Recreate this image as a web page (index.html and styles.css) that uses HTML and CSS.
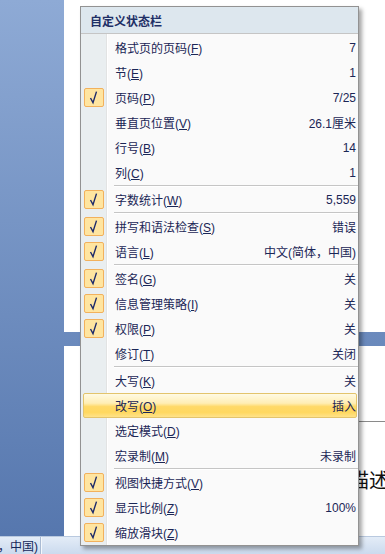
FILE: index.html
```html
<!DOCTYPE html>
<html lang="zh-CN">
<head>
  <meta charset="utf-8">
  <title>自定义状态栏</title>
  <link rel="stylesheet" href="styles.css">
</head>
<body>
<div class="window">
  <div class="workspace">
    <div class="page page-first"></div>
    <div class="page page-second">
      <div class="table-line"></div>
      <div class="doc-text">描述</div>
    </div>
  </div>
  <div class="statusbar">
    <span class="status-cell">，中国)</span>
  </div>
</div>

<div class="menu">
  <header class="menu-title">自定义状态栏</header>
  <div class="menu-body">
    <div class="item"><span class="icon"></span><span class="label">格式页的页码(<u>F</u>)</span><span class="value">7</span></div>
    <div class="item"><span class="icon"></span><span class="label">节(<u>E</u>)</span><span class="value">1</span></div>
    <div class="item"><span class="icon"><span class="check"><svg viewBox="0 0 18 17" width="18" height="17"><polyline points="5.5,9 8,13.6 11.5,2.6" fill="none" stroke="#1d2a6a" stroke-width="1.4"/></svg></span></span><span class="label">页码(<u>P</u>)</span><span class="value">7/25</span></div>
    <div class="item"><span class="icon"></span><span class="label">垂直页位置(<u>V</u>)</span><span class="value">26.1厘米</span></div>
    <div class="item"><span class="icon"></span><span class="label">行号(<u>B</u>)</span><span class="value">14</span></div>
    <div class="item"><span class="icon"></span><span class="label">列(<u>C</u>)</span><span class="value">1</span></div>
    <div class="sep"></div>
    <div class="item"><span class="icon"><span class="check"><svg viewBox="0 0 18 17" width="18" height="17"><polyline points="5.5,9 8,13.6 11.5,2.6" fill="none" stroke="#1d2a6a" stroke-width="1.4"/></svg></span></span><span class="label">字数统计(<u>W</u>)</span><span class="value">5,559</span></div>
    <div class="sep"></div>
    <div class="item"><span class="icon"><span class="check"><svg viewBox="0 0 18 17" width="18" height="17"><polyline points="5.5,9 8,13.6 11.5,2.6" fill="none" stroke="#1d2a6a" stroke-width="1.4"/></svg></span></span><span class="label">拼写和语法检查(<u>S</u>)</span><span class="value">错误</span></div>
    <div class="item"><span class="icon"><span class="check"><svg viewBox="0 0 18 17" width="18" height="17"><polyline points="5.5,9 8,13.6 11.5,2.6" fill="none" stroke="#1d2a6a" stroke-width="1.4"/></svg></span></span><span class="label">语言(<u>L</u>)</span><span class="value">中文(简体，中国)</span></div>
    <div class="sep"></div>
    <div class="item"><span class="icon"><span class="check"><svg viewBox="0 0 18 17" width="18" height="17"><polyline points="5.5,9 8,13.6 11.5,2.6" fill="none" stroke="#1d2a6a" stroke-width="1.4"/></svg></span></span><span class="label">签名(<u>G</u>)</span><span class="value">关</span></div>
    <div class="item"><span class="icon"><span class="check"><svg viewBox="0 0 18 17" width="18" height="17"><polyline points="5.5,9 8,13.6 11.5,2.6" fill="none" stroke="#1d2a6a" stroke-width="1.4"/></svg></span></span><span class="label">信息管理策略(<u>I</u>)</span><span class="value">关</span></div>
    <div class="item"><span class="icon"><span class="check"><svg viewBox="0 0 18 17" width="18" height="17"><polyline points="5.5,9 8,13.6 11.5,2.6" fill="none" stroke="#1d2a6a" stroke-width="1.4"/></svg></span></span><span class="label">权限(<u>P</u>)</span><span class="value">关</span></div>
    <div class="item"><span class="icon"></span><span class="label">修订(<u>T</u>)</span><span class="value">关闭</span></div>
    <div class="sep"></div>
    <div class="item"><span class="icon"></span><span class="label">大写(<u>K</u>)</span><span class="value">关</span></div>
    <div class="item active"><span class="icon"></span><span class="label">改写(<u>O</u>)</span><span class="value">插入</span></div>
    <div class="item"><span class="icon"></span><span class="label">选定模式(<u>D</u>)</span><span class="value"></span></div>
    <div class="item"><span class="icon"></span><span class="label">宏录制(<u>M</u>)</span><span class="value">未录制</span></div>
    <div class="sep"></div>
    <div class="item"><span class="icon"><span class="check"><svg viewBox="0 0 18 17" width="18" height="17"><polyline points="5.5,9 8,13.6 11.5,2.6" fill="none" stroke="#1d2a6a" stroke-width="1.4"/></svg></span></span><span class="label">视图快捷方式(<u>V</u>)</span><span class="value"></span></div>
    <div class="item"><span class="icon"><span class="check"><svg viewBox="0 0 18 17" width="18" height="17"><polyline points="5.5,9 8,13.6 11.5,2.6" fill="none" stroke="#1d2a6a" stroke-width="1.4"/></svg></span></span><span class="label">显示比例(<u>Z</u>)</span><span class="value">100%</span></div>
    <div class="item"><span class="icon"><span class="check"><svg viewBox="0 0 18 17" width="18" height="17"><polyline points="5.5,9 8,13.6 11.5,2.6" fill="none" stroke="#1d2a6a" stroke-width="1.4"/></svg></span></span><span class="label">缩放滑块(<u>Z</u>)</span><span class="value"></span></div>
  </div>
</div>
</body>
</html>
```

FILE: styles.css
```css
body {
    margin: 0;
    width: 385px;
    height: 554px;
    overflow: hidden;
    font-family: "Liberation Sans", "Noto Sans CJK SC", sans-serif;
    font-size: 12px;
    color: #1b2656;
}

.window {
    height: 100%;
    display: grid;
    grid-template-rows: 1fr 18px;
}

.workspace {
    display: flex;
    flex-direction: column;
    gap: 14px;
    padding-left: 64px;
    background: linear-gradient(#8eaad5, #5677ae);
    overflow: hidden;
}

.page {
    background-color: #fff;
}

.page-first {
    height: 332px;
    flex: none;
}

.page-second {
    flex: 1;
    padding-top: 75px;
}

.table-line {
    margin-left: 120px;
    border-top: 1px solid #8a8a8a;
}

.doc-text {
    margin-top: 46px;
    padding-left: 285px;
    font-family: "Noto Sans CJK SC", sans-serif;
    font-size: 20px;
    line-height: 24px;
    color: #111;
    white-space: nowrap;
}

.statusbar {
    display: flex;
    align-items: center;
    border-top: 1px solid #b9c9df;
    background: linear-gradient(#e3ecf7, #cbdaee);
}

.status-cell {
    margin-left: -2px;
    padding-right: 6px;
    width: 36px;
    height: 100%;
    display: flex;
    align-items: center;
    border-right: 1px solid #aabbd3;
    box-shadow: 1px 0 0 #f4f8fc;
    color: #15275a;
    white-space: nowrap;
}

/* popup menu */
.menu {
    position: absolute;
    left: 80px;
    top: 6px;
    width: 277px;
    border: 1px solid #929292;
    background-color: #fafafa;
    box-shadow: 3px 3px 4px rgba(0, 0, 0, 0.35);
}

.menu-title {
    height: 26px;
    padding-left: 9px;
    display: flex;
    align-items: center;
    border-bottom: 1px solid #c5c5c5;
    background-color: #dde7ee;
    font-weight: bold;
    color: #1e2f66;
}

.menu-body {
    padding: 1px 0 0;
    background: linear-gradient(to right, #e9eef0 25px, #e2e3e3 25px, #e2e3e3 26px, #fff 26px, #fff 27px, transparent 27px);
}

.item {
    height: 25px;
    display: grid;
    grid-template-columns: 27px 1fr auto;
    align-items: center;
    white-space: nowrap;
}

.item .label {
    padding-left: 7px;
}

.item .value {
    padding-right: 2px;
}

.item u {
    text-decoration-thickness: 1px;
    text-underline-offset: 1px;
}

.icon {
    display: flex;
    align-items: center;
    padding-left: 3px;
}

.check {
    width: 18px;
    height: 17px;
    display: block;
    border: 1px solid #f2b15c;
    border-radius: 2px;
    background-color: #ffe5a0;
}

.check svg {
    display: block;
}

.item.active {
    box-sizing: border-box;
    margin: 0 1px 0 2px;
    grid-template-columns: 24px 1fr auto;
    border: 1px solid #e3c46c;
    border-radius: 2px;
    background: linear-gradient(#fffae3, #ffeeb4 40%, #ffd967 55%, #ffd860 80%, #ffe38a);
}

.item.active .value {
    padding-right: 0;
}

.sep {
    height: 1px;
    margin-left: 33px;
    border-top: 1px solid #c5c5c5;
    background-color: #fff;
}
```
